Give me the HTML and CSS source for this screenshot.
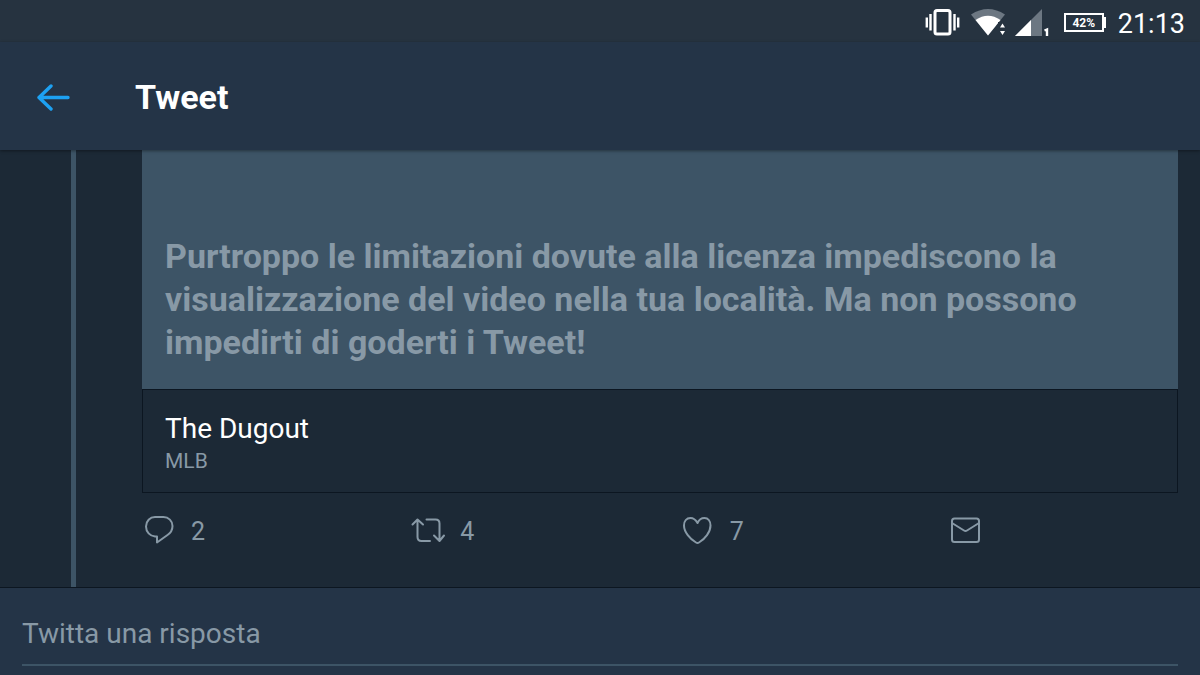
FILE: index.html
```html
<!DOCTYPE html>
<html lang="it">
<head>
  <meta charset="UTF-8">
  <meta name="viewport" content="width=device-width, initial-scale=1">
  <title>Tweet</title>
  <link rel="stylesheet" href="styles.css">
</head>
<body>
  <!-- Status bar -->
  <div class="status">
    <svg class="vibrate" width="36" height="32" viewBox="0 0 36 32">
      <rect x="10" y="5.500" width="15" height="23.500" rx="2" fill="none" stroke="#fff" stroke-width="3"/>
      <path d="M1.800 12.500v10M5.500 9v16.500M29.500 9v16.500M33.200 12.500v10" fill="none" stroke="#fff" stroke-width="2.400"/>
    </svg>
    <svg class="wifi" width="34" height="32" viewBox="0 0 34 32">
      <path d="M0 9.500Q17 -1.500 34 9.500L17 30.500Z" fill="#6c7782"/>
      <path d="M4.500 15Q17 6.500 29.500 15L17 30.500Z" fill="#fff"/>
      <path d="M27 17h7v15h-7z" fill="#263340"/>
      <path d="M29 22.500l2.500-4 2.500 4zM29 26l2.500 4 2.500-4z" fill="#fff"/>
    </svg>
    <svg class="signal" width="36" height="32" viewBox="0 0 36 32">
      <path d="M27 4v27H0z" fill="#6c7782"/>
      <path d="M16 15v16H0z" fill="#fff"/>
      <path d="M29.500 25.500l2.500-1V31" fill="none" stroke="#fff" stroke-width="2.400"/>
    </svg>
    <span class="battery">42%</span>
    <span class="clock">21:13</span>
  </div>

  <!-- Toolbar -->
  <header class="toolbar">
    <button class="back" type="button" aria-label="Indietro">
      <svg width="34" height="28" viewBox="0 0 34 28" fill="none" stroke="#1da1f2" stroke-width="3.400" stroke-linecap="round" stroke-linejoin="round">
        <path d="M32 14.500H3M15 3L3 14.500L15 26"/>
      </svg>
    </button>
    <h1>Tweet</h1>
  </header>

  <main class="thread">
    <div class="line"></div>
    <article class="tweet">
      <div class="card">
        <p class="notice">Purtroppo le limitazioni dovute alla licenza impediscono la visualizzazione del video nella tua località. Ma non possono impedirti di goderti i Tweet!</p>
        <div class="info">
          <h2>The Dugout</h2>
          <p>MLB</p>
        </div>
      </div>
      <div class="actions">
        <button type="button" aria-label="Rispondi">
          <svg width="36" height="36" viewBox="0 0 36 36">
            <path d="M13 5H21.500C26.500 5 30.500 9 30.500 14C30.500 18 28.500 21 25.500 23L15 30.500V24.500H13C8 24 4 20 4 14.500C4 9 8 5 13 5Z"/>
          </svg>
          <span>2</span>
        </button>
        <button type="button" aria-label="Ritwitta">
          <svg width="36" height="36" viewBox="0 0 36 36">
            <path d="M1.500 12.500L6.500 7.500L12 12.500M6.500 8V25Q6.500 29 10.500 29H19M15.500 7.500H24.500Q28.500 7.500 28.500 11.500V28.500M23 23.500L28.500 29L33 23.500"/>
          </svg>
          <span>4</span>
        </button>
        <button type="button" aria-label="Mi piace">
          <svg width="36" height="36" viewBox="0 0 36 36">
            <path d="M16.500 11C14.500 7.500 12 6 9.500 6C5.500 6 3 9 3 13.500C3 20 9 27 15 30.500Q16.500 31.500 18 30.500C24 27 29.500 20 29.500 13.500C29.500 9 27 6 23.500 6C20.500 6 18 7.500 16.500 11Z"/>
          </svg>
          <span>7</span>
        </button>
        <button type="button" aria-label="Messaggio">
          <svg width="36" height="36" viewBox="0 0 36 36">
            <rect x="2" y="6.500" width="27" height="23.500" rx="2.500"/>
            <path d="M2 11L14 18.500Q15.500 19.500 17 18.500L29 11"/>
          </svg>
        </button>
      </div>
    </article>
  </main>

  <!-- Reply box -->
  <form class="reply">
    <input type="text" placeholder="Twitta una risposta" aria-label="Twitta una risposta">
  </form>
</body>
</html>
```
FILE: styles.css
```css
* {
  box-sizing: border-box;
}
body {
  margin: 0;
  min-height: 100vh;
  display: flex;
  flex-direction: column;
  background-color: #243447;
  color: #fff;
  font-family: Roboto, sans-serif;
  overflow: hidden;
}
h1, h2, p {
  margin: 0;
}
button {
  padding: 0;
  border: none;
  background: none;
  font-family: inherit;
  cursor: pointer;
}
svg {
  display: block;
}
.status {
  display: flex;
  align-items: center;
  justify-content: flex-end;
  height: 42px;
  padding-right: 15px;
  background-color: #263340;
}
.wifi {
  margin-left: 10px;
}
.signal {
  margin-left: 10px;
}
.battery {
  position: relative;
  width: 40px;
  height: 19px;
  margin: 3px 14px 0 13px;
  border: 2px solid #fff;
  font-size: 12px;
  font-weight: bold;
  line-height: 16px;
  text-align: center;
}
.battery::after {
  content: "";
  position: absolute;
  top: 2px;
  right: -4px;
  width: 2px;
  height: 11px;
  background-color: #fff;
}
.clock {
  padding-top: 5px;
  font-size: 27px;
  line-height: 32px;
}
.toolbar {
  display: flex;
  align-items: center;
  position: relative;
  height: 108px;
  padding: 2px 36px 0;
  box-shadow: 0 1px 3px rgba(0, 0, 0, 0.4);
}
.toolbar h1 {
  margin-left: 65px;
  font-size: 34px;
  line-height: 40px;
}
.thread {
  display: flex;
  padding: 0 22px 0 71px;
  background-color: #1c2936;
  border-bottom: 1px solid #0c1621;
}
.line {
  flex: none;
  width: 5px;
  background-color: #3d5466;
}
.tweet {
  flex: 1;
  margin-left: 66px;
}
.notice {
  padding: 85px 23px 25px;
  background-color: #3d5466;
  color: #8899a6;
  font-size: 34px;
  font-weight: bold;
  line-height: 43px;
}
.info {
  padding: 22px 22px 16px;
  border: 1px solid #0c1621;
}
.info h2 {
  font-size: 28px;
  font-weight: normal;
  line-height: 34px;
}
.info p {
  color: #8899a6;
  font-size: 21px;
  line-height: 30px;
}
.actions {
  display: grid;
  grid-template-columns: 26% 26% 26% 1fr;
  padding: 19px 0 39px;
}
.actions button {
  display: flex;
  align-items: center;
  gap: 13px;
  color: #8899a6;
  font-size: 25px;
}
.actions span {
  padding-top: 2px;
}
.actions svg {
  fill: none;
  stroke: #8899a6;
  stroke-width: 2;
  stroke-linecap: round;
  stroke-linejoin: round;
}
.reply {
  padding: 24px 22px 10px;
}
.reply input {
  display: block;
  width: 100%;
  height: 54px;
  padding: 0 0 10px;
  border: none;
  border-bottom: 2px solid #3d5466;
  outline: none;
  background: none;
  color: #fff;
  font-family: inherit;
  font-size: 28px;
}
.reply input::placeholder {
  color: #8899a6;
}
```
